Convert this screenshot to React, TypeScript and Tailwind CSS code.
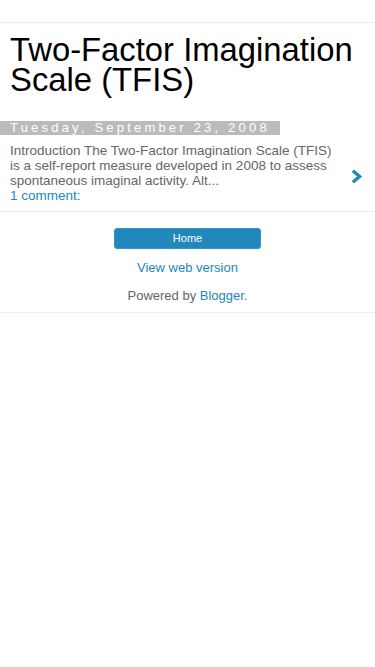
export default function App() {
  return (
    <div className="min-h-[667px] bg-white font-['Liberation_Sans',Arial,sans-serif]">
      <div className="h-[22px]" />

      {/* Header */}
      <div className="border-t border-[#ececec]">
        <h1 className="px-[10px] pt-[12px] text-[32.8px] leading-[30px] text-black font-normal">
          Two-Factor Imagination Scale (TFIS)
        </h1>
      </div>

      {/* Date */}
      <div className="mt-[26px] flex">
        <span className="block bg-[#bbbbbb] pl-[10px] pr-[10px] text-[13px] leading-[14px] tracking-[3.2px] text-white">
          Tuesday, September 23, 2008
        </span>
      </div>

      {/* Post snippet */}
      <div className="flex items-center border-b border-[#ececec] pt-[8px] pb-[8px]">
        <div className="w-[338px] shrink-0 pl-[10px] text-[13.5px] leading-[15px]">
          <p className="text-[#666666]">
            Introduction The Two-Factor Imagination Scale (TFIS) is a self-report measure developed in 2008 to assess
            spontaneous imaginal activity. Alt...
          </p>
          <p className="text-[#2288bb]">1 comment:</p>
        </div>
        <div className="flex flex-1 justify-end pt-[7px] pr-[13px]">
          <svg width="11" height="15" viewBox="0 0 11 15">
            <path d="M1.8 1.8 L8.6 7.5 L1.8 13.2" fill="none" stroke="#2288bb" strokeWidth="3.4" />
          </svg>
        </div>
      </div>

      {/* Footer */}
      <div className="flex flex-col items-center border-b border-[#ececec] pt-[16px] pb-[8px]">
        <div className="flex h-[21px] w-[147px] items-center justify-center rounded-[3px] border border-[#3394c8] bg-[#2288bb] text-[11px] text-white">
          Home
        </div>
        <div className="mt-[11px] text-[13px] leading-[16px] text-[#2288bb]">View web version</div>
        <div className="mt-[12px] text-[13px] leading-[16px] text-[#666666]">
          Powered by <span className="text-[#2288bb]">Blogger</span>.
        </div>
      </div>
    </div>
  )
}
